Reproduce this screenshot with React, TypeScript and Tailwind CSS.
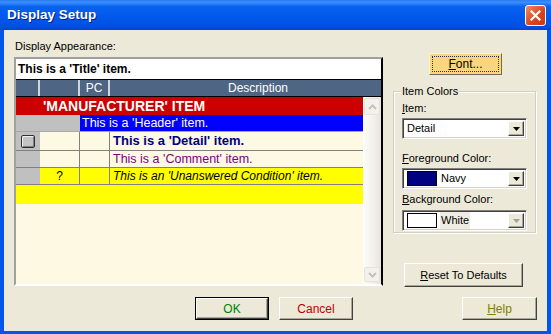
import React from 'react';

const ui = { fontFamily: '"Liberation Sans", Arial, sans-serif' };

const raised =
  'border border-t-white border-l-white border-r-[#404040] border-b-[#404040] shadow-[inset_-1px_-1px_0_#ACA899]';
const sunken =
  'border border-t-[#808080] border-l-[#808080] border-r-white border-b-white shadow-[inset_1px_1px_0_#404040,inset_-1px_-1px_0_#D4D0C8]';

function Chevron({ up }: { up?: boolean }) {
  return (
    <svg width="9" height="6" viewBox="0 0 9 6">
      <path
        d={up ? 'M1 5 L4.5 1.5 L8 5' : 'M1 1 L4.5 4.5 L8 1'}
        fill="none"
        stroke="#C4C2B8"
        strokeWidth="2"
      />
    </svg>
  );
}

function Arrow({ disabled }: { disabled?: boolean }) {
  return (
    <div className={`w-[16px] h-full bg-[#ECE9D8] ${raised} flex items-center justify-center`}>
      <svg width="7" height="4" viewBox="0 0 7 4">
        <path d="M0 0 H7 L3.5 4 Z" fill={disabled ? '#A0A0A0' : '#000'} />
      </svg>
    </div>
  );
}

function Combo({ children, disabled }: { children: React.ReactNode; disabled?: boolean }) {
  return (
    <div className={`h-[21px] w-[125px] bg-white ${sunken} flex items-stretch p-[2px]`}>
      <div className="flex-1 flex items-center text-[11px]">{children}</div>
      <Arrow disabled={disabled} />
    </div>
  );
}

function Btn({ children, className = '', isDefault = false }: { children: React.ReactNode; className?: string; isDefault?: boolean }) {
  const inner = (
    <div className={`h-full w-full bg-[#ECE9D8] ${raised} flex items-center justify-center text-[11px]`}>{children}</div>
  );
  return isDefault ? (
    <div className={`border border-black ${className}`}>{inner}</div>
  ) : (
    <div className={className}>{inner}</div>
  );
}

export default function App() {
  return (
    <div className="w-[551px] h-[334px] bg-[#0055EA] flex flex-col overflow-hidden" style={ui}>
      {/* title bar */}
      <div className="h-[30px] flex items-center pl-[7px] pr-[5px] bg-[linear-gradient(to_bottom,#2A7CF5_0%,#3C8EFF_8%,#0862EE_22%,#0058EC_60%,#0050E0_90%,#0044CC_100%)]">
        <span className="text-white font-bold text-[13.5px] [text-shadow:1px_1px_0_#0A1E80]">
          Display Setup
        </span>
        <div className="ml-auto w-[21px] h-[21px] rounded-[3px] border border-white bg-[linear-gradient(135deg,#F08A64,#D9431B_60%,#C93A16)] flex items-center justify-center">
          <svg width="11" height="11" viewBox="0 0 11 11">
            <path d="M1.5 1.5 L9.5 9.5 M9.5 1.5 L1.5 9.5" stroke="white" strokeWidth="2.2" strokeLinecap="square" />
          </svg>
        </div>
      </div>

      {/* body */}
      <div className="flex-1 mx-[4px] mb-[3px] bg-[#ECE9D8] flex flex-col pt-[10px] text-[11px] text-black">
        <div className="flex pl-[10px]">
          {/* left */}
          <div className="w-[369px] flex flex-col">
            <div className="h-[12px] leading-[12px] pl-[1px]">Display Appearance:</div>
            <div className="mt-[5px] h-[229px] border-2 border-t-[#A0A0A0] border-l-[#A0A0A0] border-r-black border-b-white flex flex-col">
              <div className="h-[21px] bg-white flex items-center pl-[2px] text-[12px] font-bold border-b border-black">
                This is a 'Title' item.
              </div>
              <div className="h-[17px] bg-[#4E6584] text-white text-[12px] flex border-b border-black">
                <div className="w-[24px] border-r-2 border-[#D0D6E0]" />
                <div className="w-[40px] border-r-2 border-[#D0D6E0]" />
                <div className="w-[30px] border-r-2 border-[#D0D6E0] flex items-center justify-center">PC</div>
                <div className="flex-1 flex items-center pl-[118px]">Description</div>
              </div>
              <div className="flex-1 flex bg-[#FEF9E3]">
                <div className="w-[347px] flex flex-col text-[12.5px]">
                  <div className="h-[18px] bg-[#CC0000] text-white font-bold text-[14px] flex items-center pl-[27px]">
                    'MANUFACTURER' ITEM
                  </div>
                  <div className="h-[16px] flex">
                    <div className="w-[64px] bg-[#C0C0C0]" />
                    <div className="flex-1 bg-[#0000FF] text-white flex items-center pl-[2px]">This is a 'Header' item.</div>
                  </div>
                  <div className="h-[19px] flex border-t border-[#A8A8A8]">
                    <div className="w-[24px] bg-[#C0C0C0] flex items-center justify-center">
                      <div className="w-[14px] h-[13px] rounded-[2px] border border-[#303030] bg-[#C4C4C4] shadow-[inset_1px_1px_0_#F0F0F0,inset_-1px_-1px_0_#808080]" />
                    </div>
                    <div className="w-[40px] border-r border-[#808080]" />
                    <div className="w-[30px] border-r border-[#808080]" />
                    <div className="flex-1 flex items-center pl-[3px] font-bold text-[13px] text-[#000080]">
                      This is a 'Detail' item.
                    </div>
                  </div>
                  <div className="h-[17px] flex border-t border-[#808080]">
                    <div className="w-[24px] bg-[#C0C0C0]" />
                    <div className="w-[40px] border-r border-[#808080]" />
                    <div className="w-[30px] border-r border-[#808080]" />
                    <div className="flex-1 flex items-center pl-[3px] text-[#800080]">This is a 'Comment' item.</div>
                  </div>
                  <div className="h-[17px] flex border-t border-[#808080] bg-[#FFFF00]">
                    <div className="w-[24px] bg-[#C0C0C0]" />
                    <div className="w-[40px] border-r border-[#808080] flex items-center justify-center text-[12px]">?</div>
                    <div className="w-[30px] border-r border-[#808080]" />
                    <div className="flex-1 flex items-center pl-[3px] italic text-[12px]">This is an 'Unanswered Condition' item.</div>
                  </div>
                  <div className="h-[20px] border-t border-[#808080] bg-[#FFFF00]" />
                </div>
                {/* scrollbar */}
                <div className="w-[18px] flex flex-col items-center py-[1px] bg-[linear-gradient(to_right,#FDFDFA,#F1F0EA_60%,#E6E4DC)]">
                  <div className="w-[16px] h-[17px] rounded-[2px] border border-[#E4E2D9] bg-[#F2F1EB] flex items-center justify-center">
                    <Chevron up />
                  </div>
                  <div className="flex-1" />
                  <div className="w-[16px] h-[15px] rounded-[2px] border border-[#E4E2D9] bg-[#F2F1EB] flex items-center justify-center mb-[1px]">
                    <Chevron />
                  </div>
                </div>
              </div>
            </div>
          </div>

          {/* right */}
          <div className="ml-[10px] w-[143px] flex flex-col">
            <div className="mt-[13px] ml-[36px] w-[73px] h-[22px] bg-[#FBD67E] border border-t-[#FFF4D0] border-l-[#FFF4D0] border-r-[#6E6A5C] border-b-[#6E6A5C] p-[2px]">
              <div className="h-full border border-dotted border-[#1F2A8A] flex items-center justify-center text-[12px]">
                <span><u>F</u>ont...</span>
              </div>
            </div>
            <div className="relative mt-[16px] h-[142px] border border-[#D0D0BF] shadow-[inset_1px_1px_0_#FFFFFF,1px_1px_0_#FFFFFF] px-[8px] pt-[10px]">
              <span className="absolute -top-[7px] left-[7px] bg-[#ECE9D8] px-[1px] leading-[12px]">Item Colors</span>
              <div className="h-[12px] leading-[12px]"><u>I</u>tem:</div>
              <div className="mt-[4px]">
                <Combo>
                  <span className="pl-[2px]">Detail</span>
                </Combo>
              </div>
              <div className="mt-[13px] h-[12px] leading-[12px]"><u>F</u>oreground Color:</div>
              <div className="mt-[4px]">
                <Combo>
                  <div className="ml-[2px] w-[30px] h-[15px] bg-[#000080] border border-black" />
                  <span className="ml-[4px]">Navy</span>
                </Combo>
              </div>
              <div className="mt-[4px] h-[12px] leading-[12px]"><u>B</u>ackground Color:</div>
              <div className="mt-[5px]">
                <Combo disabled>
                  <div className="ml-[2px] w-[30px] h-[15px] bg-white border border-black" />
                  <span className="ml-[3px] px-[1px] bg-[#EFEDE3]">White</span>
                </Combo>
              </div>
            </div>
            <Btn className="mt-[30px] ml-[11px] w-[119px] h-[24px]">
              <span><u>R</u>eset To Defaults</span>
            </Btn>
          </div>
        </div>

        {/* bottom buttons */}
        <div className="flex mt-[10px] pl-[191px] pr-[10px]">
          <Btn isDefault className="w-[74px] h-[23px]">
            <span className="text-[#008000] text-[12px]">OK</span>
          </Btn>
          <Btn className="ml-[10px] w-[74px] h-[23px]">
            <span className="text-[#C00000] text-[12px]">Cancel</span>
          </Btn>
          <Btn className="ml-auto w-[75px] h-[23px]">
            <span className="text-[#808000] text-[12px]"><u>H</u>elp</span>
          </Btn>
        </div>
      </div>
    </div>
  );
}
